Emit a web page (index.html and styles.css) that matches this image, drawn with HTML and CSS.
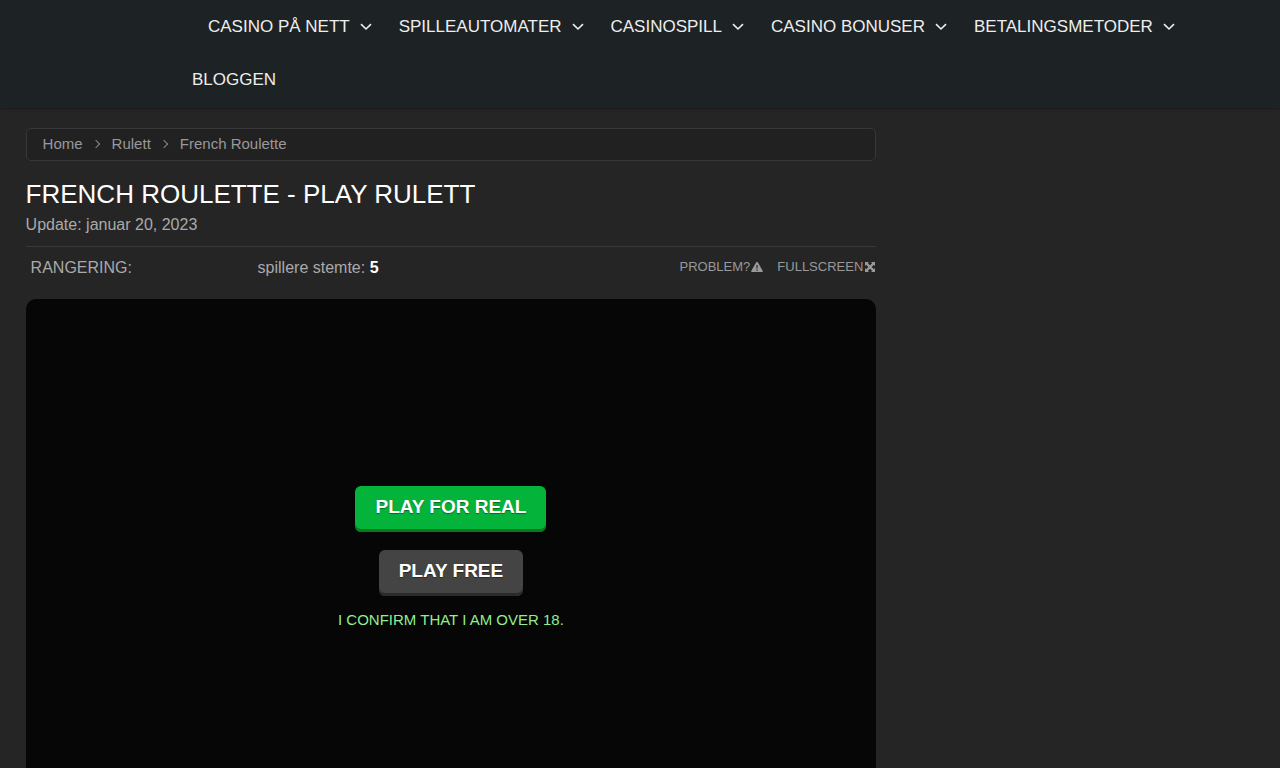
FILE: index.html
```html
<!DOCTYPE html>
<html lang="nb">
<head>
    <meta charset="utf-8">
    <meta name="viewport" content="width=device-width, initial-scale=1">
    <title>French Roulette - Play Rulett</title>
    <link rel="stylesheet" href="styles.css">
</head>
<body>
    <svg width="0" height="0" class="sprite" aria-hidden="true">
        <symbol id="chevron" viewBox="0 0 12 12">
            <path d="M1 3.2l5 4.8 5-4.8" fill="none" stroke="currentColor" stroke-width="1.6"/>
        </symbol>
    </svg>
    <header class="header">
        <nav>
            <ul class="menu">
                <li><a href="#">Casino på nett<svg class="chevron"><use href="#chevron"/></svg></a></li>
                <li><a href="#">Spilleautomater<svg class="chevron"><use href="#chevron"/></svg></a></li>
                <li><a href="#">Casinospill<svg class="chevron"><use href="#chevron"/></svg></a></li>
                <li><a href="#">Casino bonuser<svg class="chevron"><use href="#chevron"/></svg></a></li>
                <li><a href="#">Betalingsmetoder<svg class="chevron"><use href="#chevron"/></svg></a></li>
                <li><a href="#">Bloggen</a></li>
            </ul>
        </nav>
    </header>

    <div class="wrapper">
        <main class="content">
            <ol class="breadcrumbs">
                <li><a href="#">Home</a></li>
                <li><a href="#">Rulett</a></li>
                <li>French Roulette</li>
            </ol>

            <h1 class="title">French Roulette - Play Rulett</h1>
            <p class="update">Update: januar 20, 2023</p>

            <div class="game-bar">
                <span class="rating">RANGERING:</span>
                <span class="votes">spillere stemte: <b>5</b></span>
                <div class="tools">
                    <button type="button" class="tool">Problem?<svg class="tool-icon" viewBox="0 0 12 12"><path fill="currentColor" fill-rule="evenodd" d="M5.2 1.3Q6 0 6.8 1.3L11.7 9.7Q12.2 11 11 11H1Q-.2 11 .3 9.7ZM5.4 4v3.5h1.2V4ZM5.4 8.6v1.2h1.2V8.6Z"/></svg></button>
                    <button type="button" class="tool">Fullscreen<svg class="tool-icon" viewBox="0 0 12 12"><path fill="currentColor" d="M1 1h4L3.8 2.3 6 4.5 8.2 2.3 7 1h4v4L9.7 3.8 7.5 6l2.2 2.2L11 7v4H7l1.2-1.3L6 7.5 3.8 9.7 5 11H1V7l1.3 1.2L4.5 6 2.3 3.8 1 5z"/><path fill="none" stroke="currentColor" stroke-width="2" d="M2 2l8 8M10 2l-8 8"/></svg></button>
                </div>
            </div>

            <div class="game">
                <button type="button" class="button button-real">Play for real</button>
                <button type="button" class="button button-free">Play free</button>
                <p class="confirm">I confirm that I am over 18.</p>
            </div>
        </main>
    </div>
</body>
</html>
```
FILE: styles.css
```css
* {
    box-sizing: border-box;
}

body {
    margin: 0;
    background: #252525;
    color: #aaa;
    font-family: "Liberation Sans", Arial, sans-serif;
    font-size: 16px;
    line-height: 20px;
}

a {
    color: inherit;
    text-decoration: none;
}

button {
    font-family: inherit;
    text-transform: uppercase;
    border: none;
    cursor: pointer;
}

.sprite {
    position: absolute;
}

.header {
    background: #1d2224;
    padding: 0 5% 2px 15%;
    box-shadow: 0 0 3px rgba(0, 0, 0, 0.6);
}

.menu {
    display: flex;
    flex-wrap: wrap;
    column-gap: 27px;
    margin: 0;
    padding: 0;
    list-style: none;
}

.menu li:first-child {
    padding-left: 16px;
}

.menu a {
    display: flex;
    align-items: center;
    gap: 10px;
    color: #eee;
    font-size: 17px;
    line-height: 53px;
    text-transform: uppercase;
}

.chevron {
    width: 12px;
    height: 12px;
}

/* main column + empty sidebar */
.wrapper {
    display: grid;
    grid-template-columns: 9fr 4fr;
    padding: 20px 2%;
}

.breadcrumbs {
    display: flex;
    margin: 0;
    padding: 5px 16px 6px;
    background: #212121;
    border: 1px solid #383838;
    border-radius: 5px;
    list-style: none;
    color: #999;
    font-size: 15px;
}

.breadcrumbs li + li::before {
    content: "";
    display: inline-block;
    width: 5px;
    height: 5px;
    margin: 0 13px 2px 10px;
    border: solid #888;
    border-width: 1px 1px 0 0;
    transform: rotate(45deg);
}

.title {
    margin: 18px 0 0;
    color: #fff;
    font-size: 26px;
    font-weight: normal;
    line-height: 30px;
    text-transform: uppercase;
}

.update {
    margin: 6px 0 11px;
}

.game-bar {
    display: flex;
    padding: 10px 0 20px 5px;
    border-top: 1px solid #383838;
    line-height: 22px;
}

.rating {
    flex: 0 0 227px;
}

.votes b {
    color: #fff;
}

.tools {
    display: flex;
    align-items: flex-start;
    gap: 14px;
    margin-left: auto;
}

.tool {
    display: flex;
    align-items: center;
    gap: 1px;
    padding: 0;
    background: none;
    color: #999;
    font-size: 13px;
    line-height: 19px;
}

.tool-icon {
    width: 12px;
    height: 12px;
}

.game {
    display: flex;
    flex-direction: column;
    align-items: center;
    justify-content: center;
    aspect-ratio: 8 / 5;
    padding-bottom: 14px;
    background: #060606;
    border-radius: 10px;
}

.button {
    margin-bottom: 18px;
    padding: 10px 20px 14px;
    border-radius: 6px;
    color: #fff;
    font-size: 19px;
    font-weight: bold;
    line-height: 22px;
    text-shadow: 0 1px 1px rgba(0, 0, 0, 0.4);
}

.button-real {
    background: #04b43a;
    box-shadow: inset 0 -3px 0 #087a1c;
}

.button-free {
    margin-bottom: 14px;
    background: #444;
    box-shadow: inset 0 -3px 0 #2b2b2b;
}

.confirm {
    margin: 0;
    color: #90ee90;
    font-size: 15px;
    text-transform: uppercase;
}
```
